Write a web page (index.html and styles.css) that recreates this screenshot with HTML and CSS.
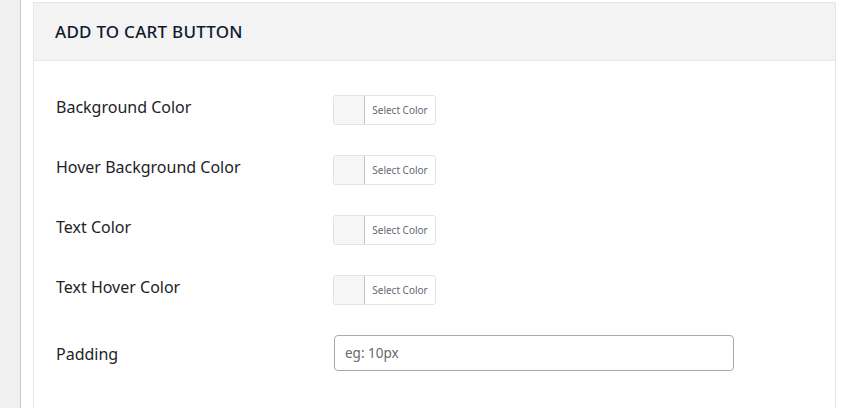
FILE: index.html
```html
<!DOCTYPE html>
<html>
<head>
<meta charset="utf-8">
<link rel="stylesheet" href="styles.css">
</head>
<body>
<div class="page">
  <div class="sidebar"></div>
  <div class="main">
    <section class="panel">
      <header class="panel-head"><h2 class="panel-title">ADD TO CART BUTTON</h2></header>
      <div class="panel-body">
        <div class="row row-first">
          <div class="label">Background Color</div>
          <div class="control"><button class="color-btn"><span class="swatch"></span><span class="color-text">Select Color</span></button></div>
        </div>
        <div class="row">
          <div class="label">Hover Background Color</div>
          <div class="control"><button class="color-btn"><span class="swatch"></span><span class="color-text">Select Color</span></button></div>
        </div>
        <div class="row">
          <div class="label">Text Color</div>
          <div class="control"><button class="color-btn"><span class="swatch"></span><span class="color-text">Select Color</span></button></div>
        </div>
        <div class="row">
          <div class="label">Text Hover Color</div>
          <div class="control"><button class="color-btn"><span class="swatch"></span><span class="color-text">Select Color</span></button></div>
        </div>
        <div class="row row-input">
          <div class="label label-input">Padding</div>
          <div class="control"><input class="text-input" type="text" placeholder="eg: 10px"></div>
        </div>
      </div>
    </section>
  </div>
</div>
</body>
</html>
```
FILE: styles.css
```css
html, body {
  margin: 0;
  padding: 0;
  background: #ffffff;
  font-family: "Noto Sans", "Open Sans", sans-serif;
  color: #1d2327;
}
.page {
  display: flex;
  height: 408px;
  overflow: hidden;
}
.sidebar {
  width: 20px;
  flex: none;
  background: #f0f0f0;
  border-right: 1px solid #c8c8c8;
}
.main {
  padding: 2px 0 0 12px;
}
.panel {
  width: 801px;
  border: 1px solid #e6e6e6;
  border-bottom: none;
  background: #ffffff;
  min-height: 420px;
}
.panel-head {
  height: 57px;
  background: #f3f3f3;
  border-bottom: 1px solid #e6e6e6;
  display: flex;
  align-items: center;
  padding-left: 21px;
}
.panel-title {
  margin: 0;
  font-size: 17px;
  font-weight: 500;
  color: #0f1a2e;
  letter-spacing: 0.25px;
}
.panel-body {
  padding: 18px 0 0 22px;
}
.row {
  display: flex;
  align-items: center;
  height: 60px;
}
.row-first {
  height: 61px;
}
.row-input {
  height: 66px;
}
.label {
  width: 277px;
  flex: none;
  font-size: 16px;
  color: #1d2327;
  padding-bottom: 6px;
}
.label-input {
  padding-bottom: 0;
  padding-top: 2px;
}
.color-btn {
  display: flex;
  align-items: stretch;
  height: 30px;
  width: 103px;
  padding: 0;
  margin: 0;
  border: 1px solid #e3e3e3;
  border-radius: 3px;
  background: #ffffff;
  font-family: inherit;
  overflow: hidden;
}
.swatch {
  width: 30px;
  background: #f5f6f5;
  border-right: 1px solid #c3c4c7;
}
.color-text {
  flex: 1;
  display: flex;
  align-items: center;
  justify-content: center;
  font-size: 10px;
  color: #646970;
}
.text-input {
  box-sizing: border-box;
  width: 400px;
  height: 36px;
  margin-left: 1px;
  border: 1px solid #a7aaad;
  border-radius: 4px;
  padding: 0 10px;
  font-family: inherit;
  font-size: 13.5px;
  color: #2c3338;
  background: #ffffff;
}
.text-input::placeholder {
  color: #646970;
}
```
